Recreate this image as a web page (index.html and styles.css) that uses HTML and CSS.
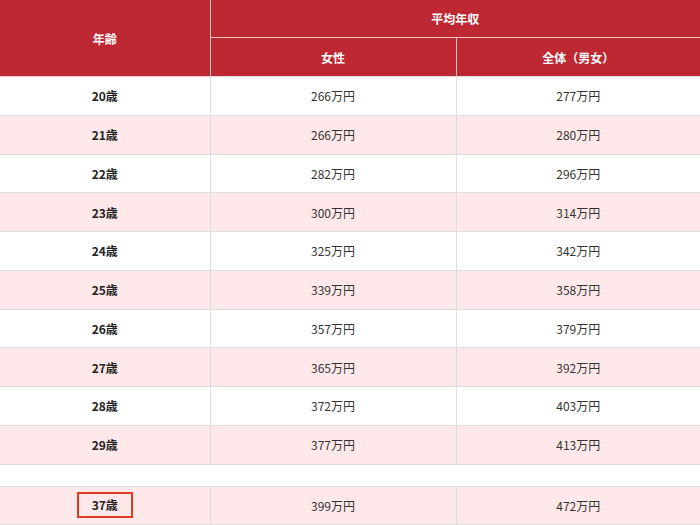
FILE: index.html
```html
<!DOCTYPE html>
<html lang="ja">
<head>
<meta charset="utf-8">
<link rel="stylesheet" href="styles.css">
</head>
<body>
<table class="salary">
  <colgroup>
    <col class="c-age">
    <col class="c-f">
    <col class="c-all">
  </colgroup>
  <thead>
    <tr class="h1">
      <th rowspan="2" class="h-age">年齢</th>
      <th colspan="2" class="h-top">平均年収</th>
    </tr>
    <tr class="h2">
      <th class="h-sub">女性</th>
      <th class="h-sub">全体（男女）</th>
    </tr>
  </thead>
  <tbody>
    <tr><td class="age">20歳</td><td>266万円</td><td>277万円</td></tr>
    <tr class="pink"><td class="age">21歳</td><td>266万円</td><td>280万円</td></tr>
    <tr><td class="age">22歳</td><td>282万円</td><td>296万円</td></tr>
    <tr class="pink"><td class="age">23歳</td><td>300万円</td><td>314万円</td></tr>
    <tr><td class="age">24歳</td><td>325万円</td><td>342万円</td></tr>
    <tr class="pink"><td class="age">25歳</td><td>339万円</td><td>358万円</td></tr>
    <tr><td class="age">26歳</td><td>357万円</td><td>379万円</td></tr>
    <tr class="pink"><td class="age">27歳</td><td>365万円</td><td>392万円</td></tr>
    <tr><td class="age">28歳</td><td>372万円</td><td>403万円</td></tr>
    <tr class="pink"><td class="age">29歳</td><td>377万円</td><td>413万円</td></tr>
    <tr class="gap"><td colspan="3"></td></tr>
    <tr class="pink"><td class="age"><span class="mark">37歳</span></td><td>399万円</td><td>472万円</td></tr>
  </tbody>
</table>
</body>
</html>
```
FILE: styles.css
```css
html, body {
  margin: 0;
  padding: 0;
  background: #ffffff;
}
body {
  font-family: "Noto Sans CJK JP", "Noto Sans", sans-serif;
  color: #333333;
}
.salary {
  width: 700px;
  table-layout: fixed;
  border-collapse: collapse;
  font-size: 12px;
}
.c-age { width: 210px; }
.c-f { width: 246px; }
.c-all { width: 244px; }

.salary th {
  background: #be2832;
  color: #ffffff;
  font-weight: bold;
  font-size: 12px;
  text-align: center;
  padding: 0;
  height: 37px;
  border: 1px solid #eec3c6;
}
.salary .h-age {
  border-left: none;
  border-top: none;
}
.salary .h-top {
  border-top: none;
  border-right: none;
}
.salary .h2 th:last-child {
  border-right: none;
}
.salary .h2 th {
  border-bottom: none;
  height: 38px;
}

.salary td {
  height: 37.75px;
  padding: 0;
  text-align: center;
  font-size: 12px;
  border: 1px solid #dddddd;
  border-top: none;
}
.salary td:first-child { border-left: none; }
.salary td:last-child { border-right: none; }
.salary tbody tr:first-child td { border-top: 1px solid #dddddd; }
.salary .age {
  font-weight: bold;
  color: #222222;
}
.salary .pink td {
  background: #ffe8ea;
}
.salary .gap td {
  height: 21px;
  background: #ffffff;
  border-left: none;
  border-right: none;
}
.mark {
  display: inline-block;
  width: 52px;
  height: 22px;
  line-height: 22px;
  border: 2px solid #e23b1f;
  vertical-align: middle;
}
```
